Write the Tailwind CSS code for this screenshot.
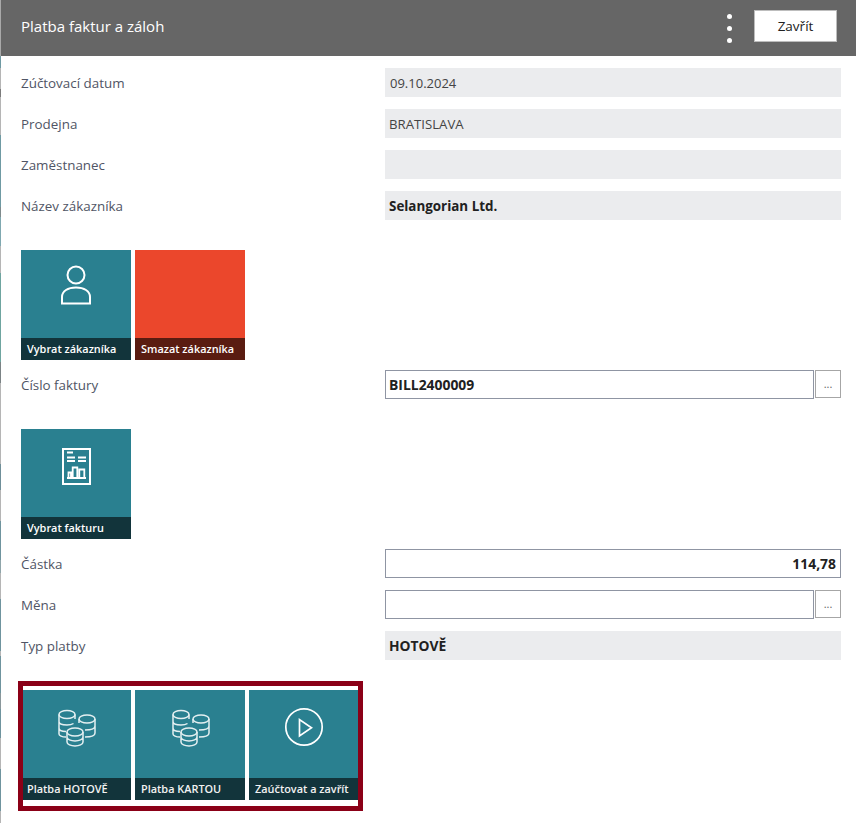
<!DOCTYPE html>
<html lang="cs">
<head>
  <meta charset="UTF-8">
  <title>Platba faktur a záloh</title>
  <script src="https://cdn.jsdelivr.net/npm/@tailwindcss/browser@4"></script>
</head>
<body class="bg-white overflow-hidden font-['Open_Sans','Noto_Sans',sans-serif] text-[13.4px] text-[#212121]">
  <div class="relative flex w-[856px] h-[823px]">
    <!-- page behind the dialog, 1px sliver on the left -->
    <div class="w-px flex flex-col shrink-0">
      <div class="h-[56px] bg-[#a9a9a9]"></div>
      <div class="h-[12px] bg-[#6f9aa3]"></div>
      <div class="h-[21px] bg-[#b5b5b5]"></div>
      <div class="h-[8px] bg-[#7b7b7b]"></div>
      <div class="h-[38px] bg-[#b5b5b5]"></div>
      <div class="h-[72px] bg-[#6f9aa3]"></div>
      <div class="h-[10px] bg-[#7f8a8c]"></div>
      <div class="h-[29px] bg-[#7fa8b0]"></div>
      <div class="h-[27px] bg-[#b5b5b5]"></div>
      <div class="h-[89px] bg-[#6fa5a0]"></div>
      <div class="h-[21px] bg-[#7b8385]"></div>
      <div class="h-[81px] bg-[#b5b5b5]"></div>
      <div class="h-[26px] bg-[#6f8f99]"></div>
      <div class="h-[31px] bg-[#b5b5b5]"></div>
      <div class="h-[39px] bg-[#6f949e]"></div>
      <div class="h-[13px] bg-[#8fa5aa]"></div>
      <div class="h-[26px] bg-[#b5b5b5]"></div>
      <div class="h-[52px] bg-[#6f949e]"></div>
      <div class="h-[5px] bg-[#b5b5b5]"></div>
      <div class="h-[37px] bg-[#6f949e]"></div>
      <div class="h-[16px] bg-[#8a979b]"></div>
      <div class="h-[29px] bg-[#6f949e]"></div>
      <div class="h-[31px] bg-[#b5b5b5]"></div>
      <div class="h-[42px] bg-[#6f949e]"></div>
      <div class="h-[12px] bg-[#b5b5b5]"></div>
    </div>

    <div class="flex-1">
      <!-- header -->
      <div class="h-14 bg-[#666666] flex items-center pl-5 pr-[19px]">
        <div class="text-white text-[15px] flex-1 pb-[3px]">Platba faktur a záloh</div>
        <div class="flex flex-col gap-[7px] mr-[22px]">
          <span class="w-[5px] h-[5px] rounded-full bg-white"></span>
          <span class="w-[5px] h-[5px] rounded-full bg-white"></span>
          <span class="w-[5px] h-[5px] rounded-full bg-white"></span>
        </div>
        <button class="w-[83px] h-[32px] mb-[4px] bg-white border border-[#bdbdbd] text-[13.5px] font-medium text-[#212121]">Zavřít</button>
      </div>

      <div class="pl-5 pr-[15px] pt-3">
        <div class="flex flex-col gap-3">
          <div class="flex items-center h-[29px]">
            <div class="w-[364px] pt-[2px] text-[#505565]">Zúčtovací datum</div>
            <div class="flex-1 h-full bg-[#ebecee] px-[5px] pt-[2px] flex items-center text-[13px] text-[#444]">09.10.2024</div>
          </div>
          <div class="flex items-center h-[29px]">
            <div class="w-[364px] pt-[2px] text-[#505565]">Prodejna</div>
            <div class="flex-1 h-full bg-[#ebecee] px-[4px] pt-[2px] flex items-center text-[13.200px] text-[#444]">BRATISLAVA</div>
          </div>
          <div class="flex items-center h-[29px]">
            <div class="w-[364px] pt-[2px] text-[#505565]">Zaměstnanec</div>
            <div class="flex-1 h-full bg-[#ebecee]"></div>
          </div>
          <div class="flex items-center h-[29px]">
            <div class="w-[364px] pt-[2px] text-[#505565]">Název zákazníka</div>
            <div class="flex-1 h-full bg-[#ebecee] px-[4px] pt-[2px] flex items-center font-bold">Selangorian Ltd.</div>
          </div>
        </div>

        <div class="flex gap-1 mt-[30px]">
          <div class="w-[110px] h-[110px] bg-[#2a8090] flex flex-col">
            <div class="flex-1 flex justify-center pt-[15px]">
              <svg width="30" height="40" viewBox="0 0 30 40" fill="none" stroke="white" stroke-width="2">
                <circle cx="15" cy="10" r="8.500"/>
                <path d="M1 38.500V32C1 26 7 22.500 15 22.500S29 26 29 32V38.500Z"/>
              </svg>
            </div>
            <div class="h-[22px] pt-px bg-[#12343b] text-white text-[10.900px] font-semibold whitespace-nowrap px-1.5 flex items-center">Vybrat zákazníka</div>
          </div>
          <div class="w-[110px] h-[110px] bg-[#eb472c] flex flex-col">
            <div class="flex-1"></div>
            <div class="h-[22px] pt-px bg-[#5a1c11] text-white text-[10.900px] font-semibold whitespace-nowrap px-1.5 flex items-center">Smazat zákazníka</div>
          </div>
        </div>

        <div class="flex items-center h-[29px] mt-[10px]">
          <div class="w-[364px] pt-[2px] text-[#505565]">Číslo faktury</div>
          <div class="flex-1 h-full bg-white border border-[#8f95a3] px-[3px] pt-[2px] flex items-center text-[13.900px] font-bold">BILL2400009</div>
          <button class="w-[26px] h-[28px] ml-px mb-px border border-[#a6a6a6] text-[11px] text-[#666]">...</button>
        </div>

        <div class="mt-[30px] w-[110px] h-[110px] bg-[#2a8090] flex flex-col">
          <div class="flex-1 flex justify-center pl-px pt-[19px]">
            <svg width="29" height="37" viewBox="0 0 29 37" fill="none" stroke="white">
              <rect x="1" y="1" width="27" height="35" stroke-width="2"/>
              <path d="M5 4.500H11M5 9.500H13M16 9.500H24M5 13H13M16 13H24" stroke-width="1.800"/>
              <path d="M5 30H24M6.500 30V24.500H9V30M10.700 30V19.500H15.300V30M17.300 30V21.500H22.300V30" stroke-width="1.800"/>
            </svg>
          </div>
          <div class="h-[22px] pt-px bg-[#12343b] text-white text-[10.900px] font-semibold whitespace-nowrap px-1.5 flex items-center">Vybrat fakturu</div>
        </div>

        <div class="flex flex-col gap-3 mt-[10px]">
          <div class="flex items-center h-[29px]">
            <div class="w-[364px] pt-[2px] text-[#505565]">Částka</div>
            <div class="flex-1 h-full bg-white border border-[#8f95a3] px-1 pt-[2px] flex items-center justify-end text-[13.900px] font-bold">114,78</div>
          </div>
          <div class="flex items-center h-[29px]">
            <div class="w-[364px] pt-[2px] text-[#505565]">Měna</div>
            <div class="flex-1 h-full bg-white border border-[#8f95a3]"></div>
            <button class="w-[26px] h-[28px] ml-px mb-px border border-[#a6a6a6] text-[11px] text-[#666]">...</button>
          </div>
          <div class="flex items-center h-[29px]">
            <div class="w-[364px] pt-[2px] text-[#505565]">Typ platby</div>
            <div class="flex-1 h-full bg-[#ebecee] px-[4px] pt-[2px] flex items-center text-[13.800px] font-bold">HOTOVĚ</div>
          </div>
        </div>

        <div class="flex gap-1 mt-[30px]">
          <div class="w-[110px] h-[110px] bg-[#2a8090] flex flex-col">
            <div class="flex-1 flex justify-center pl-0.5 pt-[19px]">
              <svg width="38" height="38" viewBox="0 0 38 38" fill="none" stroke="#e4eff1" stroke-width="1.500">
                <ellipse cx="9" cy="5.500" rx="8" ry="4"/>
                <path d="M1 5.500V25C1 26.500 4 28 8 28M17 5.500V10M1 12.500C1 15 5 16 9 16 11.500 16 14 15.500 15.500 14.500M1 19C1 21.500 4 22.500 8 22.500"/>
                <ellipse cx="29" cy="10" rx="8" ry="4"/>
                <path d="M21 10V14M37 10V24C37 26.500 33.500 28 27 28M37 17C37 19.500 33.500 21 27 21"/>
                <ellipse cx="17" cy="23" rx="8" ry="4"/>
                <path d="M9 23V33C9 35.500 13 37 17 37S25 35.500 25 33V23M9 28C9 30.500 13 32 17 32S25 30.500 25 28"/>
              </svg>
            </div>
            <div class="h-[22px] pt-px bg-[#12343b] text-[#f2f2f2] text-[10.900px] font-semibold whitespace-nowrap px-1.5 flex items-center">Platba HOTOVĚ</div>
          </div>
          <div class="w-[110px] h-[110px] bg-[#2a8090] flex flex-col">
            <div class="flex-1 flex justify-center pl-0.5 pt-[19px]">
              <svg width="38" height="38" viewBox="0 0 38 38" fill="none" stroke="#e4eff1" stroke-width="1.500">
                <ellipse cx="9" cy="5.500" rx="8" ry="4"/>
                <path d="M1 5.500V25C1 26.500 4 28 8 28M17 5.500V10M1 12.500C1 15 5 16 9 16 11.500 16 14 15.500 15.500 14.500M1 19C1 21.500 4 22.500 8 22.500"/>
                <ellipse cx="29" cy="10" rx="8" ry="4"/>
                <path d="M21 10V14M37 10V24C37 26.500 33.500 28 27 28M37 17C37 19.500 33.500 21 27 21"/>
                <ellipse cx="17" cy="23" rx="8" ry="4"/>
                <path d="M9 23V33C9 35.500 13 37 17 37S25 35.500 25 33V23M9 28C9 30.500 13 32 17 32S25 30.500 25 28"/>
              </svg>
            </div>
            <div class="h-[22px] pt-px bg-[#12343b] text-[#f2f2f2] text-[10.900px] font-semibold whitespace-nowrap px-1.5 flex items-center">Platba KARTOU</div>
          </div>
          <div class="w-[110px] h-[110px] bg-[#2a8090] flex flex-col">
            <div class="flex-1 flex justify-center pt-[17px]">
              <svg width="40" height="40" viewBox="0 0 40 40" fill="none" stroke="white" stroke-width="1.700">
                <circle cx="20" cy="20" r="18.200"/>
                <path d="M15.500 12.500V29L27.500 20.800Z"/>
              </svg>
            </div>
            <div class="h-[22px] pt-px bg-[#12343b] text-[#f2f2f2] text-[10.900px] font-semibold whitespace-nowrap px-1.5 flex items-center">Zaúčtovat a zavřít</div>
          </div>
        </div>
      </div>
    </div>

    <!-- highlight frame drawn over the tiles -->
    <div class="absolute left-[18px] top-[681px] w-[345px] h-[130px] border-[5px] border-[#8b0017]"></div>
  </div>
</body>
</html>
